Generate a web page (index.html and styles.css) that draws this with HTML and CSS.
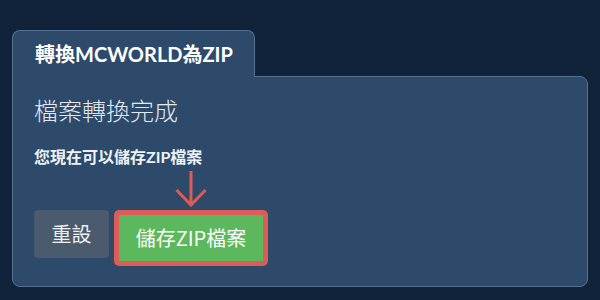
FILE: index.html
```html
<!DOCTYPE html>
<html lang="zh-Hant">
<head>
<meta charset="utf-8">
<title>轉換MCWORLD為ZIP</title>
<link rel="stylesheet" href="styles.css">
</head>
<body>
<div class="card">
  <div class="tab">轉換MCWORLD為ZIP</div>
  <div class="panel">
    <h2 class="heading">檔案轉換完成</h2>
    <p class="sub">您現在可以儲存ZIP檔案</p>
    <div class="actions">
      <button class="btn btn-reset">重設</button>
      <div class="save-wrap">
        <svg class="arrow" width="32" height="36" viewBox="0 0 32 36" aria-hidden="true">
          <path d="M16 0 V34 M1.5 19 L16 34 L30.5 19" fill="none" stroke="#e05b56" stroke-width="3"/>
        </svg>
        <button class="btn btn-save">儲存ZIP檔案</button>
      </div>
    </div>
  </div>
</div>
</body>
</html>
```

FILE: styles.css
```css
* { box-sizing: border-box; }
html, body { margin: 0; padding: 0; }
body {
  width: 600px;
  height: 300px;
  background: #11233a;
  font-family: Lato, "Noto Sans CJK TC", "Noto Sans", sans-serif;
  color: #ffffff;
  padding: 30px 12px 0 12px;
  overflow: hidden;
}
.card {
  display: flex;
  flex-direction: column;
  align-items: flex-start;
}
.tab {
  position: relative;
  z-index: 1;
  width: 243px;
  height: 47px;
  margin-bottom: -1px;
  padding: 0 0 0 22px;
  display: flex;
  align-items: center;
  background: #2d4a6a;
  border: 1px solid #57708f;
  border-bottom: none;
  border-radius: 8px 8px 0 0;
  font-size: 20px;
  font-weight: 700;
  line-height: 1;
  color: #ffffff;
}
.panel {
  width: 576px;
  background: #2d4a6a;
  border: 1px solid #57708f;
  border-radius: 0 8px 8px 8px;
  padding: 20px 21px 20px 21px;
  display: flex;
  flex-direction: column;
  align-items: flex-start;
}
.heading {
  margin: 0;
  font-size: 24px;
  line-height: 28.8px;
  font-weight: 300;
  color: #e3e9f0;
}
.sub {
  margin: 21px 0 0 0;
  font-size: 16px;
  line-height: 19.2px;
  font-weight: 700;
  color: #eef2f6;
}
.actions {
  margin-top: 44px;
  display: flex;
  align-items: flex-start;
  gap: 5px;
}
.btn {
  font-family: "Noto Sans CJK TC", "Noto Sans", sans-serif;
  font-size: 20px;
  line-height: 1;
  color: #ffffff;
  border: none;
  cursor: pointer;
  display: flex;
  align-items: center;
  justify-content: center;
}
.btn-reset {
  width: 75px;
  height: 48px;
  background: #4b5b6e;
  border-radius: 4px;
  color: #eef1f4;
}
.save-wrap {
  position: relative;
}
.btn-save {
  width: 154px;
  height: 56px;
  background: #5cb85c;
  border: 5px solid #dc5c57;
  border-radius: 5px;
}
.arrow {
  position: absolute;
  left: 61px;
  bottom: calc(100% + 3px);
}
```
